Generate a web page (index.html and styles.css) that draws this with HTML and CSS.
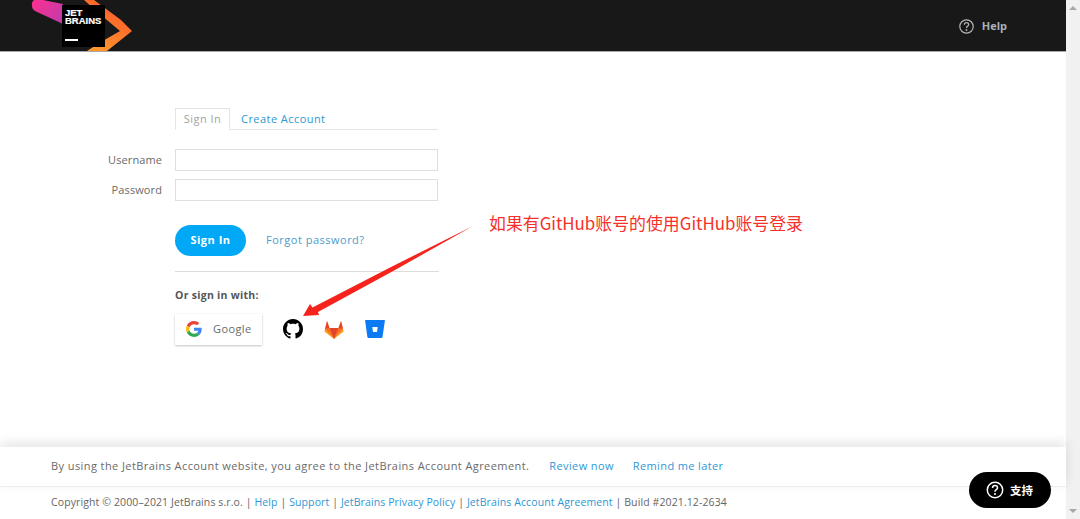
FILE: index.html
```html
<!DOCTYPE html>
<html lang="en">
<head>
<meta charset="utf-8">
<title>JetBrains Account</title>
<link rel="stylesheet" href="styles.css">
</head>
<body>
<div class="page">
  <div class="main">
    <header class="topbar">
      <svg class="logo" width="102" height="51" viewBox="0 0 102 51">
        <defs>
          <linearGradient id="pink" x1="0" y1="0" x2="1" y2="0.6"><stop offset="0" stop-color="#ff2f8e"/><stop offset="1" stop-color="#c63aa8"/></linearGradient>
          <linearGradient id="orange" x1="0" y1="1" x2="0.6" y2="0"><stop offset="0" stop-color="#ffa02e"/><stop offset="1" stop-color="#fc5a2a"/></linearGradient>
        </defs>
        <path d="M12 0 L32 4 L32 24 L4 11 Q0 8 1 3 Q1.500 1 3 0 Z" fill="url(#pink)"/>
        <polygon points="53,0 63,0 90,20 101,31 76,51 56,51 70,42 89,31 70,15" fill="url(#orange)"/>
        <rect x="31" y="5" width="43" height="42" fill="#000"/>
        <rect x="34" y="39" width="13" height="2" fill="#fff"/>
        <text class="logo-text" x="34" y="16">JET</text>
        <text class="logo-text" x="34" y="24">BRAINS</text>
      </svg>
      <a class="help">
        <svg width="15" height="15" viewBox="0 0 15 15"><circle cx="7.500" cy="7.500" r="6.700" fill="none" stroke="#b5b5b5" stroke-width="1.200"/><path d="M5.300 5.800 Q5.400 3.700 7.500 3.700 Q9.700 3.700 9.700 5.600 Q9.700 6.700 8.400 7.400 Q7.500 7.900 7.500 9" fill="none" stroke="#b5b5b5" stroke-width="1.300"/><circle cx="7.500" cy="11" r="0.900" fill="#b5b5b5"/></svg>
        <span>Help</span>
      </a>
    </header>
    <main class="content">
      <div class="tabs">
        <span class="tab active">Sign In</span>
        <a class="tab">Create Account</a>
      </div>
      <div class="row"><label class="label">Username</label><div class="field"></div></div>
      <div class="row"><label class="label">Password</label><div class="field"></div></div>
      <div class="actions">
        <button class="submit">Sign In</button>
        <a class="link">Forgot password?</a>
      </div>
      <div class="divider"></div>
      <div class="or">Or sign in with:</div>
      <div class="providers">
        <div class="google">
          <svg width="16" height="16" viewBox="0 0 48 48"><path fill="#EA4335" d="M24 9.500c3.500 0 6.700 1.300 9.100 3.500l6.800-6.800C35.800 2.400 30.200 0 24 0 14.600 0 6.500 5.400 2.600 13.200l7.900 6.200C12.400 13.600 17.700 9.500 24 9.500z"/><path fill="#4285F4" d="M47 24.500c0-1.600-.2-3.100-.4-4.500H24v9h12.900c-.6 3-2.200 5.500-4.700 7.200l7.600 5.900C44.300 37.900 47 31.800 47 24.500z"/><path fill="#FBBC05" d="M10.500 28.600c-.5-1.400-.8-3-.8-4.600s.3-3.200.8-4.600l-7.900-6.200C.9 16.500 0 20.100 0 24s.9 7.500 2.600 10.800l7.900-6.200z"/><path fill="#34A853" d="M24 48c6.500 0 11.900-2.100 15.800-5.900l-7.600-5.900c-2.100 1.400-4.900 2.300-8.200 2.300-6.300 0-11.600-4.200-13.500-9.900l-7.900 6.200C6.500 42.600 14.600 48 24 48z"/></svg>
          <span>Google</span>
        </div>
        <svg class="prov github" width="20" height="20" viewBox="0 0 16 16"><path fill="#000" d="M8 0C3.580 0 0 3.580 0 8c0 3.540 2.290 6.530 5.470 7.590.4.070.55-.17.55-.38 0-.19-.01-.82-.01-1.490-2.010.37-2.530-.49-2.690-.94-.09-.23-.48-.94-.82-1.130-.28-.15-.68-.52-.01-.53.63-.01 1.080.58 1.230.82.720 1.210 1.870.87 2.330.66.070-.52.280-.87.510-1.070-1.780-.2-3.640-.89-3.640-3.950 0-.87.310-1.590.820-2.150-.08-.2-.36-1.020.08-2.120 0 0 .67-.21 2.200.82.640-.18 1.320-.27 2-.27.680 0 1.360.09 2 .27 1.530-1.040 2.200-.82 2.200-.82.440 1.100.160 1.920.08 2.120.51.560.82 1.270.82 2.150 0 3.070-1.870 3.750-3.650 3.950.290.250.540.730.540 1.480 0 1.070-.01 1.930-.01 2.200 0 .210.150.460.550.380A8.013 8.013 0 0 0 16 8c0-4.420-3.580-8-8-8z"/></svg>
        <svg class="prov" width="20" height="19" viewBox="0 0 20 19">
          <polygon points="10,19 0.300,11.500 1,9 3,1 5.500,8 14.500,8 17,1 19,9 19.700,11.500" fill="#fca326"/>
          <polygon points="10,19 5.500,8 1,9 6,14" fill="#fc6d26"/>
          <polygon points="10,19 14.500,8 19,9 14,14" fill="#fc6d26"/>
          <polygon points="10,19 5.500,8 14.500,8" fill="#e24329"/>
          <polygon points="1,9 3,1 5.500,8" fill="#e24329"/>
          <polygon points="19,9 17,1 14.500,8" fill="#e24329"/>
        </svg>
        <svg class="prov" width="20" height="18" viewBox="0 0 20 18">
          <path d="M0.600 0 H19.400 Q20 0 19.900 .7 L17.500 17 Q17.400 18 16.400 18 H3.500 Q2.600 18 2.400 17 L0.100 .7 Q0 0 0.600 0 Z" fill="#0b7bf5"/>
          <polygon points="7.300,7 12.700,7 12,12 8,12" fill="#fff"/>
        </svg>
      </div>
    </main>
    <section class="notice">
      <span>By using the JetBrains Account website, you agree to the JetBrains Account Agreement.</span>
      <a class="link notice-first">Review now</a>
      <a class="link notice-second">Remind me later</a>
    </section>
    <footer class="footer">
      <span>Copyright © 2000–2021 JetBrains s.r.o. | <a class="link">Help</a> | <a class="link">Support</a> | <a class="link">JetBrains Privacy Policy</a> | <a class="link">JetBrains Account Agreement</a> | Build #2021.12-2634</span>
    </footer>
  </div>
  <div class="scrollbar">
    <i class="arrow-up"></i>
    <i class="arrow-down"></i>
  </div>
</div>
<svg class="annot-arrow" width="180" height="100" viewBox="0 0 180 100">
  <polygon points="0,96 7,84 9.500,87.500 90,46 170,6 92,50 15,92 16,95" fill="#f5231c"/>
</svg>
<div class="annot-text">如果有GitHub账号的使用GitHub账号登录</div>
<div class="support">
  <svg width="18" height="18" viewBox="0 0 18 18"><circle cx="9" cy="9" r="7.700" fill="none" stroke="#fff" stroke-width="1.500"/><path d="M6.500 7 Q6.600 4.600 9 4.600 Q11.500 4.600 11.500 6.800 Q11.500 8 10 8.800 Q9 9.400 9 10.700" fill="none" stroke="#fff" stroke-width="1.500"/><circle cx="9" cy="13" r="1" fill="#fff"/></svg>
  <span>支持</span>
</div>
</body>
</html>
```

FILE: styles.css
```css
* { box-sizing: border-box; }
html, body { margin: 0; height: 100%; overflow: hidden; }
body {
  font-family: "Open Sans", "Noto Sans CJK SC", sans-serif;
  font-size: 11px;
  color: #5e5e5e;
  background: #fff;
}
.page { display: flex; height: 519px; }
.main { flex: 1; min-width: 0; display: flex; flex-direction: column; }
.scrollbar {
  width: 14px;
  background: #f1f1f1;
  display: flex;
  flex-direction: column;
  justify-content: space-between;
  align-items: center;
  padding: 6px 0;
}
.arrow-up, .arrow-down { width: 0; height: 0; border-left: 4px solid transparent; border-right: 4px solid transparent; }
.arrow-up { border-bottom: 4px solid #a8a8a8; }
.arrow-down { border-top: 4px solid #a8a8a8; }

.topbar {
  height: 52px;
  flex: none;
  background: #181818;
  border-bottom: 1px solid #a8a8a8;
  display: flex;
  justify-content: space-between;
  align-items: flex-start;
  padding: 0 59px 0 31px;
}
.logo { display: block; }
.logo-text { font-family: "Liberation Sans", sans-serif; font-weight: 700; font-size: 9.500px; fill: #fff; stroke: #fff; stroke-width: .2px; letter-spacing: 0; }
.help { display: flex; align-items: center; gap: 8px; margin-top: 19px; color: #a9b0b6; font-weight: 700; font-size: 11px; }
.help span { position: relative; top: -1px; }

.content { flex: 1; padding: 56px 0 0 175px; min-height: 0; }
.tabs { display: flex; width: 263px; height: 22px; border-bottom: 1px solid #e4e4e4; }
.tab { height: 20px; display: flex; align-items: center; font-size: 11px; letter-spacing: .45px; color: #2f97d3; padding: 0 11px; }
.tab.active { width: 55px; height: 22px; justify-content: center; padding: 0 0 2px; color: #a3a3a3; border: 1px solid #e4e4e4; border-bottom: 1px solid #fff; }
.row { position: relative; margin-top: 8px; }
.tabs + .row { margin-top: 19px; }
.label { position: absolute; right: 100%; margin-right: 13px; top: 0; line-height: 22px; font-size: 11px; letter-spacing: .1px; color: #6a6a6a; white-space: nowrap; }
.field { width: 263px; height: 22px; border: 1px solid #dfdfdf; background: #fff; }
.actions { display: flex; align-items: center; gap: 20px; margin-top: 24px; }
.submit {
  width: 71px; height: 31px; border: 0; border-radius: 16px;
  background: #00a8f5; color: #fff; font: 700 11px "Open Sans", sans-serif; letter-spacing: .5px; padding: 0 0 2px;
}
.link { color: #2f97d3; letter-spacing: .38px; }
.actions .link { font-size: 11px; color: #4b9ccb; letter-spacing: .5px; position: relative; top: -1px; }
.divider { width: 264px; height: 1px; background: #dcdcdc; margin-top: 15px; }
.or { margin-top: 16px; font-weight: 700; font-size: 10.500px; letter-spacing: .28px; color: #555; line-height: 15px; }
.providers { display: flex; align-items: center; margin-top: 11px; height: 31px; }
.google {
  width: 87px; height: 31px; display: flex; align-items: center; gap: 11px;
  padding: 0 0 2px 11px; background: #fff;
  box-shadow: 0 1px 2px rgba(0,0,0,.22), 0 0 1px rgba(0,0,0,.08);
  font-size: 11px; letter-spacing: .4px; color: #6a6a6a;
}
.prov { display: block; margin-left: 21px; margin-bottom: 1px; flex: none; }

.notice {
  height: 40px; flex: none; display: flex; align-items: center;
  padding: 0 0 2px 51px; border-bottom: 1px solid #eee; background: #fff;
  box-shadow: 0 -4px 11px rgba(0,0,0,.11);
  position: relative;
  font-size: 11px; letter-spacing: .42px; color: #6a6a6a;
  white-space: nowrap;
}
.notice-first { margin-left: 20px; }
.notice-second { margin-left: 19px; }
.footer { height: 32px; flex: none; display: flex; align-items: center; padding: 0 0 2px 51px; font-size: 10.500px; letter-spacing: .11px; color: #666; white-space: nowrap; }
.footer .link { letter-spacing: .11px; }

.annot-arrow { position: absolute; left: 303px; top: 220px; }
.annot-text {
  position: absolute; left: 489px; top: 210px;
  font-family: "Noto Sans CJK SC", sans-serif; font-weight: 400; font-size: 16.900px; line-height: 25px;
  color: #f6302a; white-space: nowrap;
}
.support {
  position: absolute; left: 969px; top: 472px; width: 82px; height: 36px;
  border-radius: 18px; background: #000; color: #fff;
  display: flex; align-items: center; gap: 6px; padding-left: 17px;
  font-family: "Noto Sans CJK SC", sans-serif; font-weight: 700; font-size: 11.500px;
}
```
